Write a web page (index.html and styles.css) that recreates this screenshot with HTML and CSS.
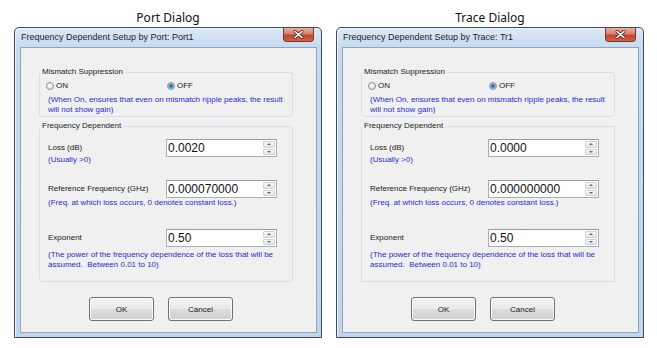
FILE: index.html
```html
<!DOCTYPE html>
<html lang="en">
  <head>
    <meta charset="UTF-8" />
    <title>Frequency Dependent Setup</title>
    <link rel="stylesheet" href="styles.css">
  </head>
  <body>
    <div class="page">
      <!-- Port dialog -->
      <section class="panel">
        <h2 class="caption">Port Dialog</h2>
        <div class="dialog">
          <div class="titlebar">
            <span class="title">Frequency Dependent Setup by Port: Port1</span>
            <span class="close">
              <svg width="11" height="9" viewBox="0 0 11 9"><path d="M2 1.5 L9 7.5 M9 1.5 L2 7.5" stroke="#6b2a20" stroke-width="3" stroke-linecap="round"/><path d="M2 1.5 L9 7.5 M9 1.5 L2 7.5" stroke="#fff" stroke-width="1.6" stroke-linecap="round"/></svg>
            </span>
          </div>
          <div class="client">
            <fieldset class="group group-mismatch">
              <legend>Mismatch Suppression</legend>
              <div class="radios">
                <span class="radio radio-on"><span class="dot"></span>ON</span>
                <span class="radio"><span class="dot checked"></span>OFF</span>
              </div>
              <p class="note">(When On, ensures that even on mismatch ripple peaks, the result will not show gain)</p>
            </fieldset>

            <fieldset class="group group-freq">
              <legend>Frequency Dependent</legend>
              <div class="field-row">
                <div class="field-label">Loss (dB)<span class="note">(Usually &gt;0)</span></div>
                <div class="spin"><span class="spin-value">0.0020</span><span class="spin-btns"><span class="up"></span><span class="down"></span></span></div>
              </div>
              <div class="field-row field-ref">
                <div class="field-label">Reference Frequency (GHz)</div>
                <div class="spin"><span class="spin-value">0.000070000</span><span class="spin-btns"><span class="up"></span><span class="down"></span></span></div>
              </div>
              <p class="note">(Freq. at which loss occurs, 0 denotes constant loss.)</p>
              <div class="field-row field-exp">
                <div class="field-label">Exponent</div>
                <div class="spin"><span class="spin-value">0.50</span><span class="spin-btns"><span class="up"></span><span class="down"></span></span></div>
              </div>
              <p class="note note-exp">(The power of the frequency dependence of the loss that will be assumed.&nbsp; Between 0.01 to 10)</p>
            </fieldset>

            <div class="buttons">
              <button class="btn">OK</button>
              <button class="btn">Cancel</button>
            </div>
          </div>
        </div>
      </section>

      <!-- Trace dialog -->
      <section class="panel">
        <h2 class="caption">Trace Dialog</h2>
        <div class="dialog">
          <div class="titlebar">
            <span class="title">Frequency Dependent Setup by Trace: Tr1</span>
            <span class="close">
              <svg width="11" height="9" viewBox="0 0 11 9"><path d="M2 1.5 L9 7.5 M9 1.5 L2 7.5" stroke="#6b2a20" stroke-width="3" stroke-linecap="round"/><path d="M2 1.5 L9 7.5 M9 1.5 L2 7.5" stroke="#fff" stroke-width="1.6" stroke-linecap="round"/></svg>
            </span>
          </div>
          <div class="client">
            <fieldset class="group group-mismatch">
              <legend>Mismatch Suppression</legend>
              <div class="radios">
                <span class="radio radio-on"><span class="dot"></span>ON</span>
                <span class="radio"><span class="dot checked"></span>OFF</span>
              </div>
              <p class="note">(When On, ensures that even on mismatch ripple peaks, the result will not show gain)</p>
            </fieldset>

            <fieldset class="group group-freq">
              <legend>Frequency Dependent</legend>
              <div class="field-row">
                <div class="field-label">Loss (dB)<span class="note">(Usually &gt;0)</span></div>
                <div class="spin"><span class="spin-value">0.0000</span><span class="spin-btns"><span class="up"></span><span class="down"></span></span></div>
              </div>
              <div class="field-row field-ref">
                <div class="field-label">Reference Frequency (GHz)</div>
                <div class="spin"><span class="spin-value">0.000000000</span><span class="spin-btns"><span class="up"></span><span class="down"></span></span></div>
              </div>
              <p class="note">(Freq. at which loss occurs, 0 denotes constant loss.)</p>
              <div class="field-row field-exp">
                <div class="field-label">Exponent</div>
                <div class="spin"><span class="spin-value">0.50</span><span class="spin-btns"><span class="up"></span><span class="down"></span></span></div>
              </div>
              <p class="note note-exp">(The power of the frequency dependence of the loss that will be assumed.&nbsp; Between 0.01 to 10)</p>
            </fieldset>

            <div class="buttons">
              <button class="btn">OK</button>
              <button class="btn">Cancel</button>
            </div>
          </div>
        </div>
      </section>
    </div>
  </body>
</html>
```

FILE: styles.css
```css
/* reset */
* {
  margin: 0;
  padding: 0;
  box-sizing: border-box;
}

body {
  background: #fff;
  font-family: "Liberation Sans", Arial, sans-serif;
  font-size: 8px;
  color: #1a1a1a;
}

.page {
  display: flex;
  gap: 14px;
  padding-left: 14px;
}

.panel {
  width: 308px;
}

/* caption above each window */
.caption {
  font-family: "Noto Sans", "Open Sans", sans-serif;
  font-weight: normal;
  font-size: 12px;
  line-height: 14px;
  padding: 11px 0 2px;
  text-align: center;
  color: #111;
}

/* window frame */
.dialog {
  height: 311px;
  display: flex;
  flex-direction: column;
  padding: 0 4px 4px 5px;
  border: 1px solid #3e4b5c;
  border-radius: 5px 5px 0 0;
  background: linear-gradient(#dce8f6, #c6daf0 20px, #c0d5ed);
  box-shadow: inset 1px 1px 0 #eef4fb;
}

.titlebar {
  height: 19px;
  display: flex;
  align-items: flex-start;
}

.title {
  flex: 1;
  line-height: 19px;
  font-size: 9px;
  padding-left: 1px;
  color: #1e1e1e;
}

.close {
  width: 31px;
  height: 14px;
  margin-right: 3px;
  display: flex;
  align-items: center;
  justify-content: center;
  border: 1px solid #7a3a30;
  border-top: none;
  border-radius: 0 0 4px 4px;
  background: linear-gradient(#eab0a2, #d8806b 45%, #c0452e 55%, #d2614a);
}

/* client area */
.client {
  flex: 1;
  background: #f0f0f0;
  border: 1px solid #8ea4bf;
  padding: 19px 0 0 18px;
}

/* group boxes */
.group {
  width: 254px;
  border: 1px solid #d5dfe5;
  border-radius: 3px;
  padding: 0 4px 1px 8px;
}

.group legend {
  line-height: 10px;
  padding: 0 2px;
  margin-left: -8px;
  color: #222;
}

.group-freq {
  margin-top: 4px;
  padding-top: 8px;
  padding-bottom: 11px;
}

.radios {
  display: flex;
  margin-top: 4px;
  margin-left: -2px;
  line-height: 10px;
}

.radio {
  display: flex;
  align-items: center;
}

.radio-on {
  width: 121px;
}

.dot {
  width: 8px;
  height: 8px;
  margin-right: 2px;
  border: 1px solid #8f9193;
  border-radius: 50%;
  background: radial-gradient(circle at 40% 40%, #fdfdfd, #d4d4d4);
}

.dot.checked {
  background: radial-gradient(circle, #1f5a8c 0, #3d8ac4 1.6px, #b7d3ea 3px, #e9eef2 4px);
}

.note {
  display: block;
  line-height: 10px;
  color: #2a2ad2;
}

.group-mismatch .note {
  margin-top: 4px;
}

/* fields */
.field-row {
  display: flex;
  align-items: flex-start;
}

.field-label {
  width: 118px;
  padding-top: 4px;
  line-height: 10px;
}

.field-label .note {
  margin-top: 2px;
}

.field-ref {
  margin-top: 15px;
}

.field-exp {
  margin-top: 21px;
}

.note-exp {
  margin-top: 3px;
}

/* numeric up-down */
.spin {
  width: 111px;
  height: 18px;
  display: flex;
  border: 1px solid #abadb3;
  border-top-color: #9a9ca3;
  background: #fff;
}

.spin-value {
  flex: 1;
  font-size: 12px;
  line-height: 16px;
  padding-left: 1px;
  color: #111;
}

.spin-btns {
  width: 12px;
  margin: 1px 1px 1px 0;
  display: flex;
  flex-direction: column;
  gap: 1px;
}

.spin-btns span {
  flex: 1;
  display: flex;
  align-items: center;
  justify-content: center;
  border: 1px solid #d0d2d5;
  border-radius: 1px;
  background: linear-gradient(#f7f7f7, #e3e4e6);
}

.spin-btns span::after {
  content: "";
  border-left: 2px solid transparent;
  border-right: 2px solid transparent;
}

.spin-btns .up::after {
  border-bottom: 2px solid #5d6b82;
}

.spin-btns .down::after {
  border-top: 2px solid #5d6b82;
}

/* OK / Cancel */
.buttons {
  width: 254px;
  margin-top: 15px;
  padding-right: 10px;
  display: flex;
  justify-content: center;
  gap: 14px;
}

.btn {
  width: 65px;
  height: 24px;
  font-family: "Liberation Sans", Arial, sans-serif;
  font-size: 8px;
  color: #1a1a1a;
  border: 1px solid #707070;
  border-radius: 3px;
  background: linear-gradient(#f2f2f2, #ebebeb 50%, #dddddd 50%, #cfcfcf);
  box-shadow: inset 0 0 0 1px #fcfcfc;
}
```
